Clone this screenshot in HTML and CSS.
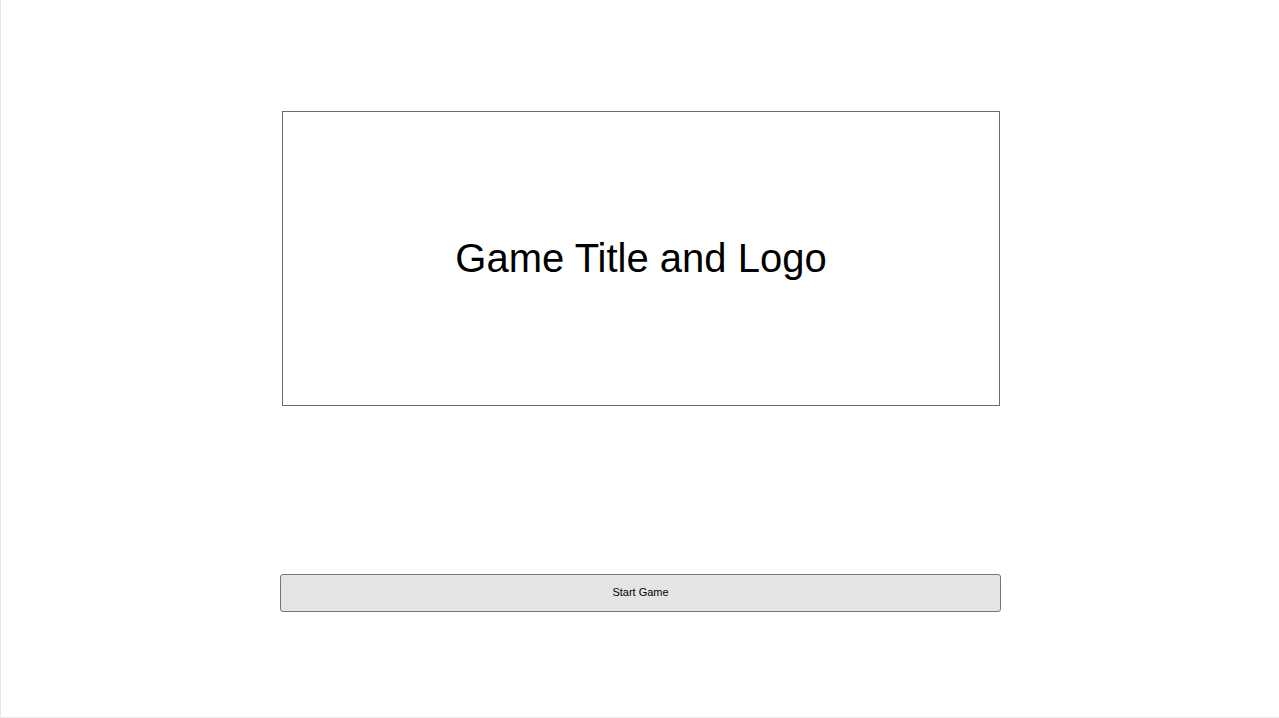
FILE: index.html
```html
<!DOCTYPE html>
<html>
<head>
<meta charset="utf-8">
<link rel="stylesheet" href="styles.css">
</head>
<body>
<div class="screen">
  <div class="title-box">Game Title and Logo</div>
  <button class="start-btn">Start Game</button>
</div>
</body>
</html>
```

FILE: styles.css
```css
html, body {
  margin: 0;
  padding: 0;
  background: #ffffff;
}
body {
  font-family: "Liberation Sans", Arial, sans-serif;
}
.screen {
  box-sizing: border-box;
  width: 1279px;
  height: 718px;
  border-left: 1px solid #e6e6e6;
  border-bottom: 1px solid #ececec;
  display: flex;
  flex-direction: column;
  align-items: center;
  padding-top: 111px;
  padding-left: 1px;
}
.title-box {
  box-sizing: border-box;
  width: 718px;
  height: 295px;
  border: 1px solid #6b6b6b;
  display: flex;
  align-items: center;
  justify-content: center;
  font-size: 40px;
  color: #000;
  margin-left: 1px;
}
.start-btn {
  box-sizing: border-box;
  margin-top: 168px;
  width: 721px;
  height: 38px;
  background: #e5e5e5;
  border: 1px solid #767676;
  border-radius: 3px;
  font-family: "Liberation Sans", Arial, sans-serif;
  font-size: 11px;
  color: #000;
  padding: 0 0 2px 0;
}
```
